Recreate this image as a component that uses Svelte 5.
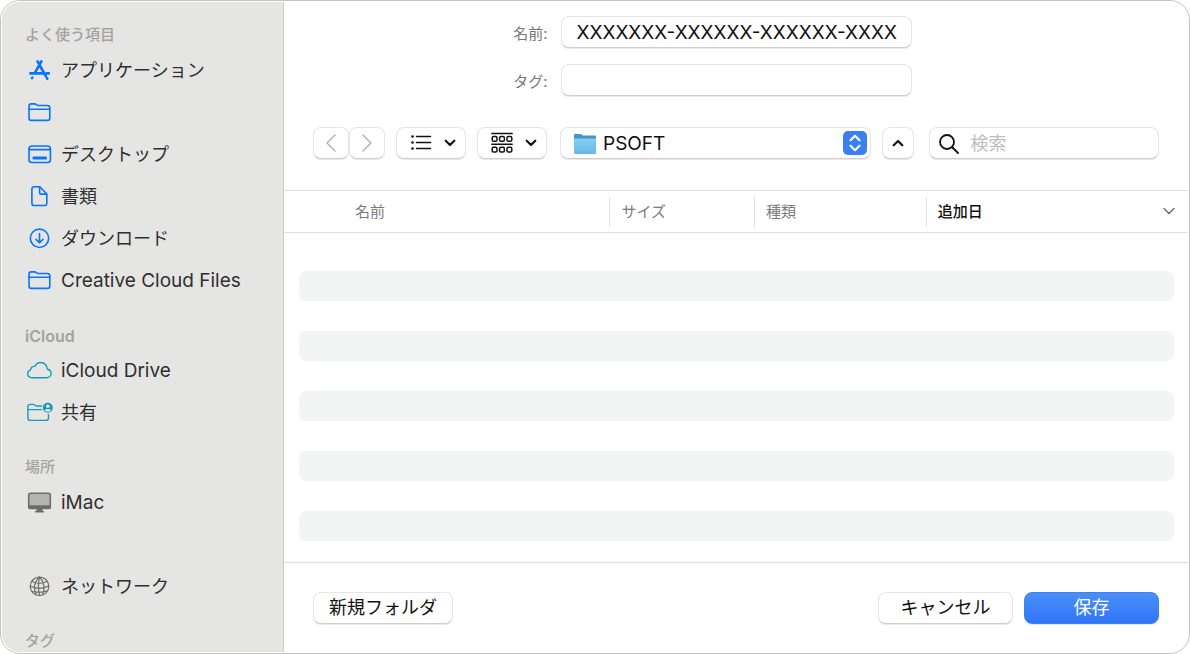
<script lang="ts">
	type Item = { label: string; icon: string; hint?: string };
	type Section = { title: string; items: Item[] };

	const sections: Section[] = [
		{
			title: 'よく使う項目',
			items: [
				{ label: 'アプリケーション', icon: 'apps' },
				{ label: '', icon: 'folder', hint: 'フォルダ' },
				{ label: 'デスクトップ', icon: 'desktop' },
				{ label: '書類', icon: 'document' },
				{ label: 'ダウンロード', icon: 'download' },
				{ label: 'Creative Cloud Files', icon: 'folder' }
			]
		},
		{
			title: 'iCloud',
			items: [
				{ label: 'iCloud Drive', icon: 'cloud' },
				{ label: '共有', icon: 'shared' }
			]
		},
		{
			title: '場所',
			items: [
				{ label: 'iMac', icon: 'imac' },
				{ label: '', icon: '' },
				{ label: 'ネットワーク', icon: 'network' }
			]
		},
		{ title: 'タグ', items: [] }
	];

	const columns = ['名前', 'サイズ', '種類', '追加日'];
	const rows = Array.from({ length: 10 }, (_, i) => i);

	let name = $state('XXXXXXX-XXXXXX-XXXXXX-XXXX');
	let tags = $state('');
	let query = $state('');
	let sorted = $state('追加日');

	const isLatin = (text: string) => /^[\x20-\x7e]+$/.test(text);
</script>

{#snippet icon(kind: string)}
	<svg class="icon {kind}" viewBox="0 0 27 24" aria-hidden="true">
		{#if kind === 'apps'}
			<g stroke-width="2.6">
				<path d="M11.5 3.4 19.7 18M15.4 3.4 8.6 15.4M4.4 15.4h12M20.6 15.4h2.2M21.3 20.8l-.5-.9M6 20.2l.3-.5" />
			</g>
		{:else if kind === 'folder'}
			<path d="M3 6.2c0-1.6.8-2.3 2.2-2.3h3.2c1 0 1.5.3 2.1.8.6.6 1 .8 1.9.8h9c1.6 0 2.4.8 2.4 2.3V18c0 1.6-.8 2.4-2.4 2.4H5.3C3.800 20.400 3 19.600 3 18z" />
			<path d="M3 9.200h20.800" />
		{:else if kind === 'desktop'}
			<rect x="3" y="4" width="21.4" height="16.5" rx="2.8" />
			<path d="M3 7.600h21.400" />
			<rect class="solid" x="6.6" y="14.6" width="14.2" height="3" rx=".6" />
		{:else if kind === 'document'}
			<path d="M8.2 2.800h5.600l7 7.200v9.200c0 1.600-.8 2.300-2.300 2.300H8.200c-1.500 0-2.300-.8-2.300-2.300V5.100c0-1.500.8-2.300 2.300-2.300z" />
			<path d="M13.600 3v5.400c0 1.200.5 1.700 1.700 1.700h5.300" />
		{:else if kind === 'download'}
			<circle cx="13.5" cy="12.3" r="9.2" />
			<path d="M13.500 7.600v9M10 13.400l3.500 3.400 3.500-3.400" />
		{:else if kind === 'cloud'}
			<path d="M7.200 19.800h13.300c2.700 0 4.600-1.900 4.600-4.300 0-2.200-1.500-3.900-3.700-4.300-.2-3.900-3-6.700-6.500-6.700-2.700 0-4.900 1.500-6 3.900-2.600-.3-4.200 1.300-4.400 3.500-1.800.6-2.800 2-2.800 3.800 0 2.300 2.100 4.100 5.500 4.100z" />
		{:else if kind === 'shared'}
			<path d="M15.500 6H11c-.9 0-1.300-.3-1.900-.8-.6-.6-1.100-.8-2.100-.8H4.200C2.700 4.400 1.900 5.100 1.900 6.700V18c0 1.600.8 2.400 2.300 2.400h15.900c1.600 0 2.400-.8 2.400-2.400v-3.600M1.900 9.600h13.600" />
			<circle class="solid" cx="21.8" cy="7.8" r="5" />
			<circle class="hole" cx="21.8" cy="6.3" r="1.8" />
			<path class="hole" d="M18.500 10.600c1-2.300 5.600-2.300 6.600 0-1.700 1.600-4.900 1.600-6.600 0z" />
		{:else if kind === 'imac'}
			<rect x="2.7" y="3.2" width="21.6" height="15.2" rx="1.8" fill="#b4b4b2" />
			<path class="solid" d="M2 15.200h23v1.900c0 1.300-.7 2-2 2H4c-1.300 0-2-.7-2-2zM10.500 19h6v2h1.400v1.500H9.100V21h1.400z" />
		{:else if kind === 'network'}
			<g stroke-width="1.2">
				<circle cx="13.5" cy="12.3" r="9.3" />
				<path d="M13.600 3c-5.500 4.600-6.600 12-3.300 18M13.600 3c4.600 4.500 5.600 11.700 3 17.800M13.600 3c-1.600 6-1.500 12.500.1 18.500M5.600 7.300c4.600 2.400 10.900 2.500 15.700 0M4.200 12.300c5.500 2.200 13 2.200 18.600-.3M5.800 17.500c4.500.9 10.600.9 15.300-.3" />
			</g>
		{/if}
	</svg>
{/snippet}

{#snippet chevronDown()}
	<svg class="chevron" viewBox="0 0 12 8" aria-hidden="true"><path d="M1.700 1.700 6 6l4.300-4.300" /></svg>
{/snippet}

<div class="window">
	<nav class="sidebar">
		{#each sections as section}
			<section>
				<h2 class:latin={isLatin(section.title)}>{section.title}</h2>
				<ul>
					{#each section.items as item}
						<li>
							{#if item.icon}
								<a href="#top" aria-label={item.hint}>
									{@render icon(item.icon)}
									<span class:latin={isLatin(item.label)}>{item.label}</span>
								</a>
							{/if}
						</li>
					{/each}
				</ul>
			</section>
		{/each}
	</nav>

	<main>
		<form class="fields">
			<label for="name">名前:</label>
			<input id="name" class="control" type="text" bind:value={name} />
			<label for="tags">タグ:</label>
			<input id="tags" class="control" type="text" bind:value={tags} />
		</form>

		<div class="toolbar">
			<div class="nav-buttons">
				<button class="control" aria-label="戻る">
					<svg class="arrow" viewBox="0 0 12 20" aria-hidden="true"><path d="M10 2 2 10l8 8" /></svg>
				</button>
				<button class="control" aria-label="進む">
					<svg class="arrow" viewBox="0 0 12 20" aria-hidden="true"><path d="m2 2 8 8-8 8" /></svg>
				</button>
			</div>
			<button class="control view" aria-label="リスト表示">
				<svg class="glyph" viewBox="0 0 22 22" aria-hidden="true">
					<path d="M6.500 4.500h14M6.500 10.500h14M6.500 16.500h14" />
					<g class="solid">
						<circle cx="2.5" cy="4.5" r="1.3" />
						<circle cx="2.5" cy="10.5" r="1.3" />
						<circle cx="2.5" cy="16.5" r="1.3" />
					</g>
				</svg>
				{@render chevronDown()}
			</button>
			<button class="control view" aria-label="グループ">
				<svg class="glyph" viewBox="0 0 22 22" aria-hidden="true">
					<path d="M.8 1.500h20.400M.8 12.300h20.400" />
					{#each [4.5, 15.3] as y}
						{#each [1.2, 8.6, 16] as x}
							<rect {x} {y} width="4.8" height="4.8" rx="1.4" />
						{/each}
					{/each}
				</svg>
				{@render chevronDown()}
			</button>
			<div class="location">
				<svg class="folder-color" viewBox="0 0 24 22" aria-hidden="true">
					<defs>
						<linearGradient id="front" x1="0" y1="0" x2="0" y2="1">
							<stop offset="0" stop-color="#84cdf2" />
							<stop offset="1" stop-color="#67b9e6" />
						</linearGradient>
					</defs>
					<path fill="#3f97c9" d="M1 2.200C1 1.400 1.400 1 2.200 1h5.600c.9 0 1.400 1.600 2.300 1.600h11.700c.8 0 1.200.4 1.200 1.200V8H1z" />
					<path fill="url(#front)" d="M1 5.600h22v14.200c0 .8-.4 1.200-1.200 1.200H2.200c-.8 0-1.200-.4-1.200-1.200z" />
				</svg>
				<select class="control" aria-label="場所">
					<option>PSOFT</option>
				</select>
				<svg class="stepper" viewBox="0 0 24 24" aria-hidden="true">
					<rect width="24" height="24" rx="5" />
					<path d="m7.500 9.300 4.500-4.500 4.500 4.500M7.500 14.700l4.500 4.500 4.500-4.500" />
				</svg>
			</div>
			<button class="control expand" aria-label="折りたたむ">
				<svg class="chevron" viewBox="0 0 12 8" aria-hidden="true"><path d="M1.700 6.300 6 2l4.300 4.300" /></svg>
			</button>
			<div class="search">
				<svg viewBox="0 0 20 20" aria-hidden="true"><path d="M13.500 13.500 19 19" /><circle cx="8" cy="8" r="7" /></svg>
				<input class="control" type="search" placeholder="検索" aria-label="検索" bind:value={query} />
			</div>
		</div>

		<table>
			<thead>
				<tr>
					{#each columns as column}
						<th scope="col">
							<button class:sorted={sorted === column} onclick={() => (sorted = column)}>
								{column}
								{#if sorted === column}
									<svg viewBox="0 0 12 8" aria-hidden="true"><path d="M1 1.500 6 6.500l5-5" /></svg>
								{/if}
							</button>
						</th>
					{/each}
				</tr>
			</thead>
			<tbody>
				{#each rows as row (row)}
					<tr>
						{#each columns as column (column)}
							<td><div></div></td>
						{/each}
					</tr>
				{/each}
			</tbody>
		</table>

		<footer>
			<button class="control new-folder">新規フォルダ</button>
			<button class="control action">キャンセル</button>
			<button class="control action primary">保存</button>
		</footer>
	</main>
</div>

<style>
	:global(body) {
		margin: 0;
		background: #fff;
	}
	.window {
		display: flex;
		box-sizing: border-box;
		min-height: 100vh;
		padding: 1px;
		border: 1px solid #c4c4c4;
		border-radius: 20px;
		overflow: hidden;
		background: #fff;
		color: #111;
		font-family: Inter, 'Noto Sans CJK JP', sans-serif;
		font-size: 18px;
	}
	button,
	input,
	select {
		font: inherit;
		color: inherit;
	}
	svg {
		flex: none;
		fill: none;
		stroke: currentColor;
		stroke-linecap: round;
		stroke-linejoin: round;
	}
	.solid {
		fill: currentColor;
		stroke: none;
	}

	/* sidebar */
	.sidebar {
		box-sizing: border-box;
		flex: none;
		width: 282px;
		padding-top: 19px;
		border-right: 1px solid #cbcbca;
		border-radius: 18px 0 0 18px;
		background: #e5e5e3;
		color: #2f2f2f;
	}
	section + section {
		margin-top: 20px;
	}
	h2 {
		margin: 0;
		padding-left: 23px;
		color: #a3a3a2;
		font-size: 15px;
		font-weight: 500;
		line-height: 28px;
	}
	h2.latin {
		font-size: 16px;
		font-weight: 600;
		line-height: 30px;
		height: 28px;
	}
	section:last-child h2 {
		height: 24px;
	}
	ul {
		margin: 0;
		padding: 0;
		list-style: none;
	}
	li {
		height: 42px;
	}
	li a {
		display: flex;
		align-items: center;
		gap: 8px;
		height: 100%;
		padding-left: 24px;
		color: inherit;
		text-decoration: none;
	}
	li span {
		padding-bottom: 2px;
	}
	li span.latin {
		padding-bottom: 0;
		font-size: 19px;
	}
	.icon {
		width: 27px;
		height: 24px;
		color: #0a74f8;
		stroke-width: 1.6;
	}
	.icon.cloud,
	.icon.shared {
		color: #1a9bb3;
		stroke-width: 1.4;
	}
	.icon.imac,
	.icon.network {
		color: #6c6c6b;
	}
	.hole {
		fill: #e5e5e3;
		stroke: none;
	}

	/* shared look of fields and buttons */
	.control {
		box-sizing: border-box;
		height: 32px;
		border: 1px solid #e6e6e6;
		border-bottom-color: #cfcfcf;
		border-radius: 8px;
		background: #fff;
		box-shadow: 0 1px 1px rgba(0, 0, 0, 0.1);
	}

	main {
		display: flex;
		flex: 1;
		flex-direction: column;
		min-width: 0;
	}
	.fields {
		display: grid;
		grid-template-columns: 1fr 351px 1fr;
		gap: 16px 13px;
		align-items: center;
		padding-top: 14px;
	}
	.fields label {
		grid-column: 1;
		justify-self: end;
		color: #767676;
		font-size: 15px;
	}
	.fields input {
		width: 100%;
		padding: 1px 12px 0 15px;
		font-size: 19px;
	}

	.toolbar {
		display: flex;
		gap: 11px;
		padding: 31px 29px 31px;
	}
	.toolbar button {
		display: flex;
		align-items: center;
		justify-content: center;
		padding: 0;
	}
	.nav-buttons {
		display: flex;
	}
	.nav-buttons button {
		width: 36px;
	}
	.arrow {
		width: 12px;
		height: 20px;
		color: #b3b3b3;
		stroke-width: 1.5;
	}
	.toolbar .view {
		gap: 12px;
		width: 70px;
		padding-left: 3px;
	}
	.glyph {
		width: 22px;
		height: 22px;
		stroke-width: 1.5;
	}
	.chevron {
		width: 12px;
		height: 8px;
		stroke-width: 2.2;
	}
	.location {
		position: relative;
		flex: 312;
		margin-left: 2px;
	}
	.location select {
		width: 100%;
		padding: 0 40px 0 42px;
		appearance: none;
		font-size: 19px;
	}
	.folder-color {
		position: absolute;
		top: 6px;
		left: 13px;
		width: 24px;
		height: 22px;
		stroke: none;
		pointer-events: none;
	}
	.stepper {
		position: absolute;
		top: 4px;
		right: 4px;
		width: 24px;
		height: 24px;
		color: #fff;
		stroke-width: 2.2;
		pointer-events: none;
	}
	.stepper rect {
		fill: #3b7ff5;
		stroke: none;
	}
	.expand {
		width: 32px;
	}
	.search {
		position: relative;
		flex: 230;
		margin-left: 4px;
	}
	.search input {
		width: 100%;
		padding: 0 12px 0 40px;
		appearance: none;
	}
	.search input::placeholder {
		color: #bdbdbd;
	}
	.search svg {
		position: absolute;
		top: 7px;
		left: 10px;
		width: 20px;
		height: 20px;
		stroke-width: 1.8;
	}

	table {
		width: 100%;
		border-spacing: 0;
		table-layout: fixed;
	}
	th {
		padding: 0;
		border: solid #dedede;
		border-width: 1px 0;
		height: 41px;
	}
	th:nth-child(1) {
		width: 36%;
	}
	th:nth-child(2) {
		width: 16%;
	}
	th:nth-child(3) {
		width: 19%;
	}
	th button {
		display: flex;
		box-sizing: border-box;
		align-items: center;
		justify-content: space-between;
		width: 100%;
		height: 30px;
		padding: 0 13px 2px 11px;
		border: 0;
		border-left: 1px solid #dedede;
		background: none;
		color: #7b7b7b;
		font-size: 15px;
		font-weight: 400;
	}
	th:first-child button {
		padding-left: 71px;
		border-left: 0;
	}
	th button.sorted {
		color: #111;
		font-weight: 500;
	}
	th svg {
		width: 12px;
		height: 8px;
		color: #666;
		stroke-width: 1.3;
	}
	td {
		padding: 0;
	}
	td div {
		height: 30px;
	}
	tbody tr:first-child td {
		padding-top: 8px;
	}
	tbody tr:nth-child(even) div {
		background: #f3f5f4;
	}
	td:first-child div {
		margin-left: 15px;
		border-radius: 7px 0 0 7px;
	}
	td:last-child div {
		margin-right: 14px;
		border-radius: 0 7px 7px 0;
	}

	footer {
		display: flex;
		flex: 1;
		align-items: flex-start;
		gap: 11px;
		margin-top: 21px;
		padding: 29px 29px 28px;
		border-top: 1px solid #dedede;
	}
	footer button {
		padding: 0 15px;
		line-height: 28px;
	}
	.new-folder {
		margin-right: auto;
	}
	.action {
		width: 135px;
	}
	.primary {
		border-color: #3b82f2;
		background: linear-gradient(#4a8ff8, #3075f6);
		color: #fff;
	}
</style>
